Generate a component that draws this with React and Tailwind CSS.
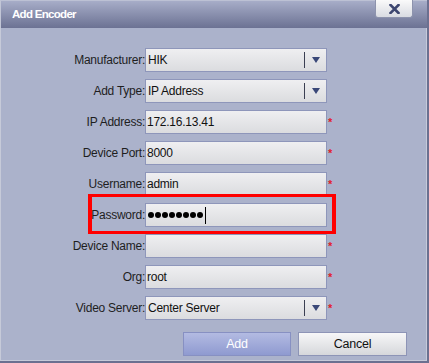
import React from "react";

const rows = [
    { label: "Manufacturer:", value: "HIK", kind: "select", required: false },
    { label: "Add Type:", value: "IP Address", kind: "select", required: false },
    { label: "IP Address:", value: "172.16.13.41", kind: "text", required: true },
    { label: "Device Port:", value: "8000", kind: "text", required: true },
    { label: "Username:", value: "admin", kind: "text", required: true },
    { label: "Password:", value: "", kind: "password", required: false },
    { label: "Device Name:", value: "", kind: "text", required: true },
    { label: "Org:", value: "root", kind: "text", required: true },
    { label: "Video Server:", value: "Center Server", kind: "select", required: true },
];

const Field = ({ row }) => {
    return (
        <div className="flex items-center h-[24px] mb-[7px]">
            <div className="w-[144px] text-right text-[#1e1e1e] whitespace-nowrap">{row.label}</div>
            <div className="w-[182px] h-[24px] flex items-center border border-[#8e96ba] bg-linear-to-b from-[#efeff1] to-[#dbdcdf]">
                {row.kind == "select" && (
                    <>
                        <span className="flex-1 pl-[2px] text-[#111]">{row.value}</span>
                        <span className="w-px h-[16px] bg-[#3b3f52]"></span>
                        <span className="w-[21px] flex items-center justify-center">
                            <svg width="8" height="6" viewBox="0 0 8 6"><path d="M0 0 L8 0 L4 6 Z" fill="#3a4878" /></svg>
                        </span>
                    </>
                )}
                {row.kind == "text" && (
                    <span className="flex-1 pl-[1px] text-[#111]">{row.value}</span>
                )}
                {row.kind == "password" && (
                    <div className="flex items-center pl-[2px] gap-[1px]">
                        {[0, 1, 2, 3, 4, 5, 6, 7].map((i) => (
                            <span key={i} className="w-[6px] h-[6px] rounded-full bg-black"></span>
                        ))}
                        <span className="w-px h-[17px] bg-black ml-[1px]"></span>
                    </div>
                )}
            </div>
            {row.required && <span className="ml-[1px] text-[#e0202a] text-[11px] font-bold leading-none mt-[1px]">*</span>}
        </div>
    );
}

const App = () => {
    return (
        <div className="relative w-[429px] h-[363px] bg-[#6b7090] flex flex-col text-[12px] tracking-[-0.25px]" style={{ fontFamily: '"Liberation Sans", Arial, sans-serif' }}>
            <div className="h-[28px] flex items-center pl-[11px] bg-linear-to-b from-[#a7adc8] to-[#6c7293] border-t border-[#bcc1d4] border-l border-l-[#c2c6d6] mr-[2px]">
                <span className="text-white font-bold text-[11.5px] tracking-[-0.7px]">Add Encoder</span>
                <div className="ml-auto mr-[14px] self-start w-[38px] h-[18px] -mt-px flex items-center justify-center border border-[#8d93ad] border-t-0 rounded-b-[3px] bg-linear-to-b from-[#fafafa] to-[#d9dbe2]">
                    <svg width="11" height="10" viewBox="0 0 11 10">
                        <path d="M1.5 1 L9.5 9 M9.5 1 L1.5 9" stroke="#3d4670" strokeWidth="2.6" strokeLinecap="square" />
                    </svg>
                </div>
            </div>
            <div className="flex-1 flex flex-col bg-[#abb2cb] border-l border-r border-b border-[#c6cad9] mr-[2px] mb-[2px] pt-[20px]">
                {rows.map((row) => (
                    <Field key={row.label} row={row} />
                ))}
                <div className="flex justify-end gap-[7px] pr-[19px] mt-[5px]">
                    <button className="w-[108px] h-[24px] border border-[#8790c2] bg-linear-to-b from-[#b3bbe2] to-[#8f9ad0] text-white text-[12.5px]">Add</button>
                    <button className="w-[109px] h-[24px] border border-[#8d94b6] bg-linear-to-b from-[#f7f7f8] to-[#d6d7db] text-[#111] text-[12.5px]">Cancel</button>
                </div>
            </div>
            <div className="absolute left-[88px] top-[194px] w-[248px] h-[40px] border-x-4 border-y-[3px] border-[#ff0000]"></div>
        </div>
    );
}

export default App;
